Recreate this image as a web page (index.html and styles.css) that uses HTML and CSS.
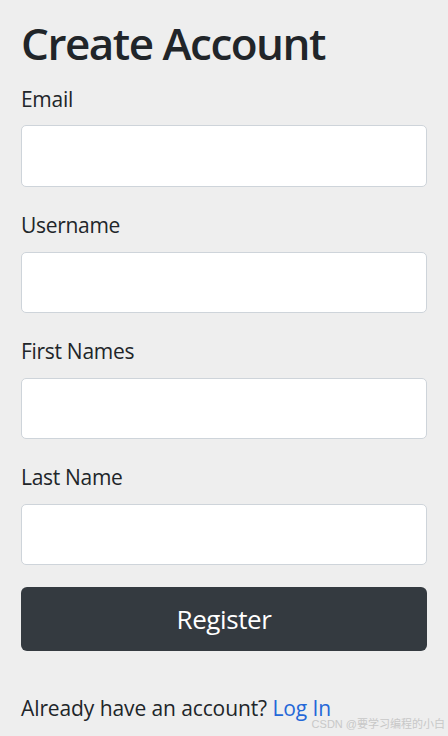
FILE: index.html
```html
<!DOCTYPE html>
<html lang="en">
<head>
<meta charset="utf-8">
<title>Create Account</title>
<link rel="stylesheet" href="styles.css">
</head>
<body>
<main class="page">
  <h1 class="title">Create Account</h1>
  <form class="form">
    <div class="group">
      <label class="label" for="email">Email</label>
      <input class="input" id="email" type="text">
    </div>
    <div class="group">
      <label class="label" for="username">Username</label>
      <input class="input" id="username" type="text">
    </div>
    <div class="group">
      <label class="label" for="first">First Names</label>
      <input class="input" id="first" type="text">
    </div>
    <div class="group">
      <label class="label" for="last">Last Name</label>
      <input class="input" id="last" type="text">
    </div>
    <button class="btn" type="button">Register</button>
  </form>
  <p class="footer">Already have an account? <a class="link" href="#">Log In</a></p>
</main>
<div class="watermark">CSDN @要学习编程的小白</div>
</body>
</html>
```
FILE: styles.css
```css
html, body {
  margin: 0;
  padding: 0;
  background: #eeeeee;
}
body {
  font-family: "Open Sans", "Noto Sans", sans-serif;
  color: #212529;
  height: 736px;
  position: relative;
  overflow: hidden;
}
.page {
  padding: 0 21px;
}
.title {
  margin: 15px 0 12px;
  font-size: 44px;
  line-height: 56px;
  font-weight: 600;
  letter-spacing: -1.5px;
}
.form {
  display: flex;
  flex-direction: column;
}
.group {
  display: flex;
  flex-direction: column;
  margin-bottom: 21px;
}
.label {
  font-size: 21px;
  line-height: 33px;
  margin-bottom: 9px;
  letter-spacing: -0.3px;
}
.group + .group .label {
  margin-top: 1px;
  margin-bottom: 10px;
}
.input {
  box-sizing: border-box;
  height: 62px;
  width: 100%;
  border: 1px solid #ced4da;
  border-radius: 5px;
  background: #ffffff;
  margin: 0;
}
.group + .group .input {
  height: 61px;
}
.btn {
  box-sizing: border-box;
  margin-top: 1px;
  height: 64px;
  width: 100%;
  border: none;
  border-radius: 6px;
  background: #343a40;
  color: #ffffff;
  font-family: "Open Sans", "Noto Sans", sans-serif;
  font-size: 26px;
  line-height: 62px;
  letter-spacing: -0.4px;
  padding: 0;
}
.footer {
  margin: 41px 0 0;
  font-size: 21px;
  line-height: 33px;
  letter-spacing: -0.1px;
}
.link {
  color: #2468d8;
  text-decoration: none;
}
.watermark {
  position: absolute;
  right: 3px;
  bottom: 6px;
  font-family: "Liberation Sans", "Noto Sans CJK SC", sans-serif;
  font-size: 11px;
  line-height: 12px;
  color: #c8c8c8;
}
```
